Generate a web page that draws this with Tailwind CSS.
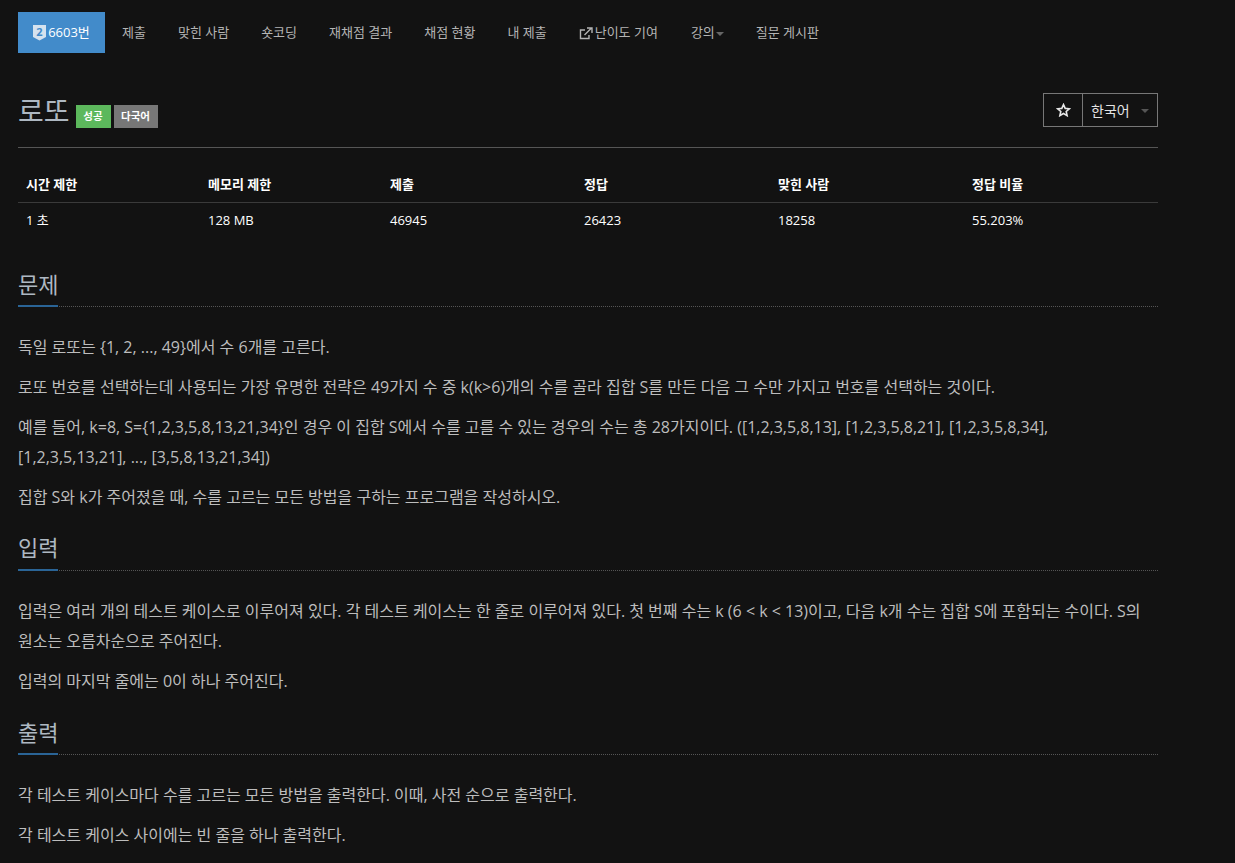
<!DOCTYPE html>
<html lang="ko"><head><meta charset="utf-8">
<script src="https://cdn.jsdelivr.net/npm/@tailwindcss/browser@4"></script>
</head>
<body class="bg-[#121212] h-[863px] overflow-hidden font-['Open_Sans','Noto_Sans_CJK_KR',sans-serif] text-[16px] text-[#bdbdbd]">
<div class="w-[1140px] ml-[18px]">
<nav class="flex pt-3 h-[53px] text-[13px] text-[#b4b4b4]">
<a class="flex items-center justify-center gap-[2px] w-[87px] h-[41px] pt-[1px] bg-[#428bca] text-white">
<svg width="13" height="16" viewBox="0 0 13 16"><path d="M0 0H13V12L6.5 15.5 0 12Z" fill="#d5e2ee"/><text x="6.5" y="10.5" font-size="11" font-weight="700" text-anchor="middle" fill="#428bca">2</text></svg>
<span>6603번</span></a>
<a class="flex items-center h-[41px] pt-[1px] ml-[17px]">제출</a>
<a class="flex items-center h-[41px] pt-[1px] ml-[32px]">맞힌 사람</a>
<a class="flex items-center h-[41px] pt-[1px] ml-[32px]">숏코딩</a>
<a class="flex items-center h-[41px] pt-[1px] ml-[32px]">재채점 결과</a>
<a class="flex items-center h-[41px] pt-[1px] ml-[32px]">채점 현황</a>
<a class="flex items-center h-[41px] pt-[1px] ml-[32px]">내 제출</a>
<a class="flex items-center h-[41px] pt-[1px] ml-[32px] gap-[2px]"><svg width="14" height="13" viewBox="0 0 14 13" fill="none" stroke="#b4b4b4" stroke-width="1.4"><path d="M10 8V11.5H1.5V3H6"/><path d="M5.5 8L12 1.5M8 1H13V6"/></svg>난이도 기여</a>
<a class="flex items-center h-[41px] pt-[1px] ml-[33px]">강의<span class="ml-[1px] mt-[1px] border-x-4 border-x-transparent border-t-4 border-t-[#666]"></span></a>
<a class="flex items-center h-[41px] pt-[1px] ml-[32px]">질문 게시판</a>
</nav>
<div class="flex justify-between items-start mt-[40px] h-[55px] border-b border-[#555]">
<div class="flex items-end">
<h1 class="text-[28px] leading-[36px] text-[#aeb8c2]">로또</h1>
<span class="ml-[6px] mb-[1px] w-[35px] h-[23px] flex items-center justify-center bg-[#5cb85c] text-white text-[10.5px] font-bold">성공</span>
<span class="ml-[3px] mb-[1px] w-[44px] h-[23px] flex items-center justify-center bg-[#777] text-white text-[10.5px] font-bold">다국어</span>
</div>
<div class="flex w-[115px] h-[34px] border border-[#777] text-[14px] text-[#e4e4e4]">
<span class="w-[39px] border-r border-[#777] flex items-center justify-center"><svg width="15" height="14" viewBox="0 0 15 14" fill="none" stroke="#e8e8e8" stroke-width="1.6"><path d="M7.5 1.6L9.2 5.4 13.3 5.8 10.2 8.5 11.1 12.6 7.5 10.5 3.9 12.6 4.8 8.5 1.7 5.8 5.8 5.4Z"/></svg></span>
<span class="flex-1 flex items-center pl-[8px]">한국어<span class="ml-[11px] mt-[2px] border-x-4 border-x-transparent border-t-4 border-t-[#555]"></span></span>
</div>
</div>
<table class="mt-[20px] w-[1140px] table-fixed text-[13px] text-white">
<thead><tr class="h-[34px] border-b border-[#3a3a3a] font-bold text-left">
<th class="w-[182px] pl-2">시간 제한</th><th class="w-[182px] pl-2">메모리 제한</th><th class="w-[194px] pl-2">제출</th><th class="w-[194px] pl-2">정답</th><th class="w-[194px] pl-2">맞힌 사람</th><th class="pl-2">정답 비율</th>
</tr></thead>
<tbody><tr class="h-[36px]">
<td class="pl-2">1 초</td><td class="pl-2">128 MB</td><td class="pl-2">46945</td><td class="pl-2">26423</td><td class="pl-2">18258</td><td class="pl-2">55.203%</td>
</tr></tbody></table>
<section class="mt-[31px]">
<div class="relative border-b border-dotted border-[#555] h-[38px]">
<h2 class="text-[22px] leading-[30px] text-[#aeb8c2]">문제</h2>
<span class="absolute left-0 bottom-[-1px] w-[40px] h-[2px] bg-[#2a6496]"></span>
</div>
<div class="mt-[25px] leading-[30px]">
<p class="mb-[10px]">독일 로또는 {1, 2, ..., 49}에서 수 6개를 고른다.</p>
<p class="mb-[10px]">로또 번호를 선택하는데 사용되는 가장 유명한 전략은 49가지 수 중 k(k&gt;6)개의 수를 골라 집합 S를 만든 다음 그 수만 가지고 번호를 선택하는 것이다.</p>
<p class="mb-[10px]">예를 들어, k=8, S={1,2,3,5,8,13,21,34}인 경우 이 집합 S에서 수를 고를 수 있는 경우의 수는 총 28가지이다. ([1,2,3,5,8,13], [1,2,3,5,8,21], [1,2,3,5,8,34], [1,2,3,5,13,21], ..., [3,5,8,13,21,34])</p>
<p class="mb-[10px]">집합 S와 k가 주어졌을 때, 수를 고르는 모든 방법을 구하는 프로그램을 작성하시오.</p>
</div>
</section>
<section class="mt-[20px]">
<div class="relative border-b border-dotted border-[#555] h-[39px]">
<h2 class="text-[22px] leading-[30px] text-[#aeb8c2]">입력</h2>
<span class="absolute left-0 bottom-[-1px] w-[40px] h-[2px] bg-[#2a6496]"></span>
</div>
<div class="mt-[25px] leading-[30px]">
<p class="mb-[10px]">입력은 여러 개의 테스트 케이스로 이루어져 있다. 각 테스트 케이스는 한 줄로 이루어져 있다. 첫 번째 수는 k (6 &lt; k &lt; 13)이고, 다음 k개 수는 집합 S에 포함되는 수이다. S의 원소는 오름차순으로 주어진다.</p>
<p class="mb-[10px]">입력의 마지막 줄에는 0이 하나 주어진다.</p>
</div>
</section>
<section class="mt-[21px]">
<div class="relative border-b border-dotted border-[#555] h-[38px]">
<h2 class="text-[22px] leading-[30px] text-[#aeb8c2]">출력</h2>
<span class="absolute left-0 bottom-[-1px] w-[40px] h-[2px] bg-[#2a6496]"></span>
</div>
<div class="mt-[25px] leading-[30px]">
<p class="mb-[10px]">각 테스트 케이스마다 수를 고르는 모든 방법을 출력한다. 이때, 사전 순으로 출력한다.</p>
<p class="mb-[10px]">각 테스트 케이스 사이에는 빈 줄을 하나 출력한다.</p>
</div>
</section>
</div>
</body></html>
